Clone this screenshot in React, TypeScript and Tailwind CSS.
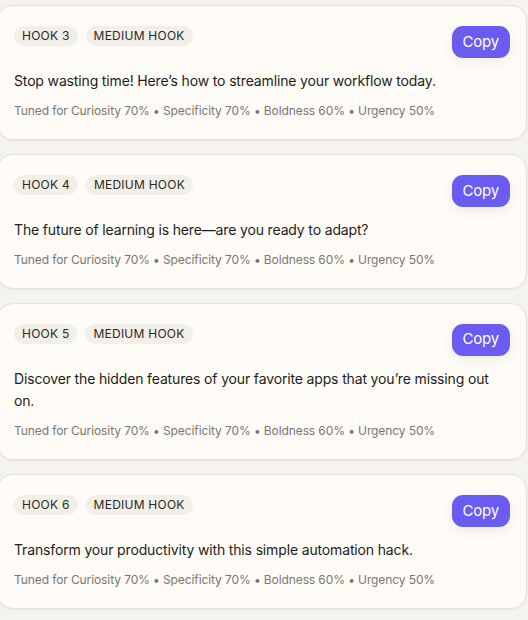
import React from 'react'

interface Hook {
  id: number
  strength: string
  text: string
}

const hooks: Hook[] = [
  { id: 3, strength: 'Medium hook', text: 'Stop wasting time! Here’s how to streamline your workflow today.' },
  { id: 4, strength: 'Medium hook', text: 'The future of learning is here—are you ready to adapt?' },
  { id: 5, strength: 'Medium hook', text: 'Discover the hidden features of your favorite apps that you’re missing out on.' },
  { id: 6, strength: 'Medium hook', text: 'Transform your productivity with this simple automation hack.' },
]

const tuning = 'Tuned for Curiosity 70% • Specificity 70% • Boldness 60% • Urgency 50%'

function HookCard({ hook }: { hook: Hook }) {
  return (
    <div className="rounded-2xl border border-[#e6e2db] bg-[#fffcf8] px-4 py-5 shadow-[0_1px_3px_rgba(0,0,0,0.05)]">
      <div className="flex items-start justify-between">
        <div className="flex gap-2">
          <span className="flex h-5 items-center rounded-full bg-[#f2efe9] px-2 text-[12px] uppercase tracking-[0.02em] text-[#2b2926]">
            Hook {hook.id}
          </span>
          <span className="flex h-5 items-center rounded-full bg-[#f2efe9] px-2 text-[12px] uppercase tracking-[0.02em] text-[#2b2926]">
            {hook.strength}
          </span>
        </div>
        <button className="h-8 rounded-[11px] bg-[#6b5cf1] px-[11px] text-[15px] tracking-[-0.2px] text-white shadow-[0_4px_14px_rgba(0,0,0,0.07)]">
          Copy
        </button>
      </div>
      <p className="mt-3 pr-3 text-[14px] leading-[22.75px] tracking-[-0.15px] text-[#1d1c1a]">{hook.text}</p>
      <p className="mt-2.5 text-[12px] leading-4 tracking-[-0.1px] text-[#7a7671]">{tuning}</p>
    </div>
  )
}

export default function App() {
  return (
    <div className="min-h-screen overflow-hidden bg-[#f5f3ef] pt-[5px]" style={{ fontFamily: 'Inter, "Noto Sans", sans-serif' }}>
      <div className="-ml-[3px] flex w-[530px] flex-col gap-[14px]">
        {hooks.map((h) => (
          <HookCard key={h.id} hook={h} />
        ))}
      </div>
    </div>
  )
}
